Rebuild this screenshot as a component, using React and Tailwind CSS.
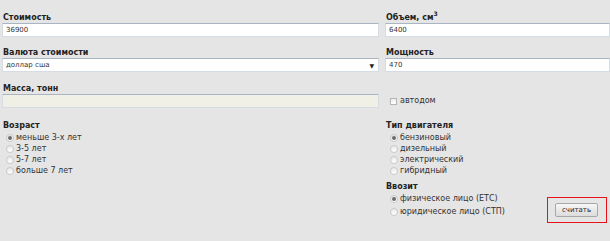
import React from 'react';

const font = { fontFamily: '"DejaVu Sans", Verdana, sans-serif' };

const Label = ({ children }) => (
    <div className="h-[10px] pl-[1px] text-[8px] leading-[10px] font-bold text-[#222]">{children}</div>
);

const TextInput = ({ value, beige }) => (
    <div className={`h-[14px] border border-t-[#a9b5c2] border-x-[#d5dce4] border-b-[#d5dce4] px-[3px] text-[7px] leading-[12px] text-[#333] ${beige ? 'bg-[#f1f0e6]' : 'bg-white'}`}>
        {value}
    </div>
);

const Radio = ({ checked }) => (
    <span className="w-[8px] h-[8px] rounded-full border border-[#c9c9c9] bg-gradient-to-b from-[#e9e9e9] to-white flex items-center justify-center shrink-0">
        {checked && <span className="w-[4px] h-[4px] rounded-full bg-[#6b6b6b]" />}
    </span>
);

const RadioGroup = ({ items, rowH }) => (
    <div>
        {items.map((it, i) => (
            <div key={i} className={`flex items-center gap-[2px] ${rowH} text-[8px] text-[#333]`}>
                <Radio checked={i === 0} />
                <span>{it}</span>
            </div>
        ))}
    </div>
);

export default function App() {
    return (
        <div className="w-[610px] h-[241px] bg-[#e5e5e5] overflow-hidden pt-[13px]" style={font}>
            <div className="grid grid-cols-[377px_225px] gap-x-[6px] pl-[2px]">
                {/* row 1 */}
                <div>
                    <Label>Стоимость</Label>
                    <TextInput value="36900" />
                </div>
                <div>
                    <Label>Объем, см<sup className="text-[6px] leading-none align-[1px]">3</sup></Label>
                    <TextInput value="6400" />
                </div>

                {/* row 2 */}
                <div className="mt-[11px]">
                    <Label>Валюта стоимости</Label>
                    <div className="h-[14px] border border-t-[#a9b5c2] border-x-[#d5dce4] border-b-[#d5dce4] bg-white px-[3px] flex items-center justify-between text-[7px] text-[#333]">
                        <span>доллар сша</span>
                        <span className="text-[6px] text-[#222] mr-[1px]">▼</span>
                    </div>
                </div>
                <div className="mt-[11px]">
                    <Label>Мощность</Label>
                    <TextInput value="470" />
                </div>

                {/* row 3 */}
                <div className="mt-[12px]">
                    <Label>Масса, тонн</Label>
                    <TextInput value="" beige />
                </div>
                <div className="mt-[12px] pt-[12px]">
                    <div className="flex items-center gap-[3px] ml-[5px] h-[10px] text-[8px] text-[#333]">
                        <span className="w-[7px] h-[7px] border border-[#b5b5b5] bg-gradient-to-b from-[#ececec] to-white" />
                        <span>автодом</span>
                    </div>
                </div>

                {/* row 4 */}
                <div className="mt-[13px]">
                    <Label>Возраст</Label>
                    <div className="ml-[4px] mt-[1px]">
                        <RadioGroup rowH="h-[11px]" items={['меньше 3-х лет', '3-5 лет', '5-7 лет', 'больше 7 лет']} />
                    </div>
                </div>
                <div className="mt-[13px]">
                    <Label>Тип двигателя</Label>
                    <div className="ml-[5px] mt-[1px]">
                        <RadioGroup rowH="h-[11px]" items={['бензиновый', 'дизельный', 'электрический', 'гибридный']} />
                    </div>
                    <div className="flex justify-between items-start pr-[3px] mt-[6px]">
                        <div>
                            <Label>Ввозит</Label>
                            <div className="ml-[5px]">
                                <RadioGroup rowH="h-[13px]" items={['физическое лицо (ЕТС)', 'юридическое лицо (СТП)']} />
                            </div>
                        </div>
                        <div className="mt-[15px] w-[60px] h-[26px] border border-[#e8121b] flex items-start pl-[7px] pt-[5px]">
                            <button className="w-[43px] h-[14px] border border-[#a8a8a8] rounded-[2px] bg-gradient-to-b from-[#f7f7f7] to-[#dcdcdc] text-[7px] leading-[12px] text-[#222]">
                                считать
                            </button>
                        </div>
                    </div>
                </div>
            </div>
        </div>
    );
}
